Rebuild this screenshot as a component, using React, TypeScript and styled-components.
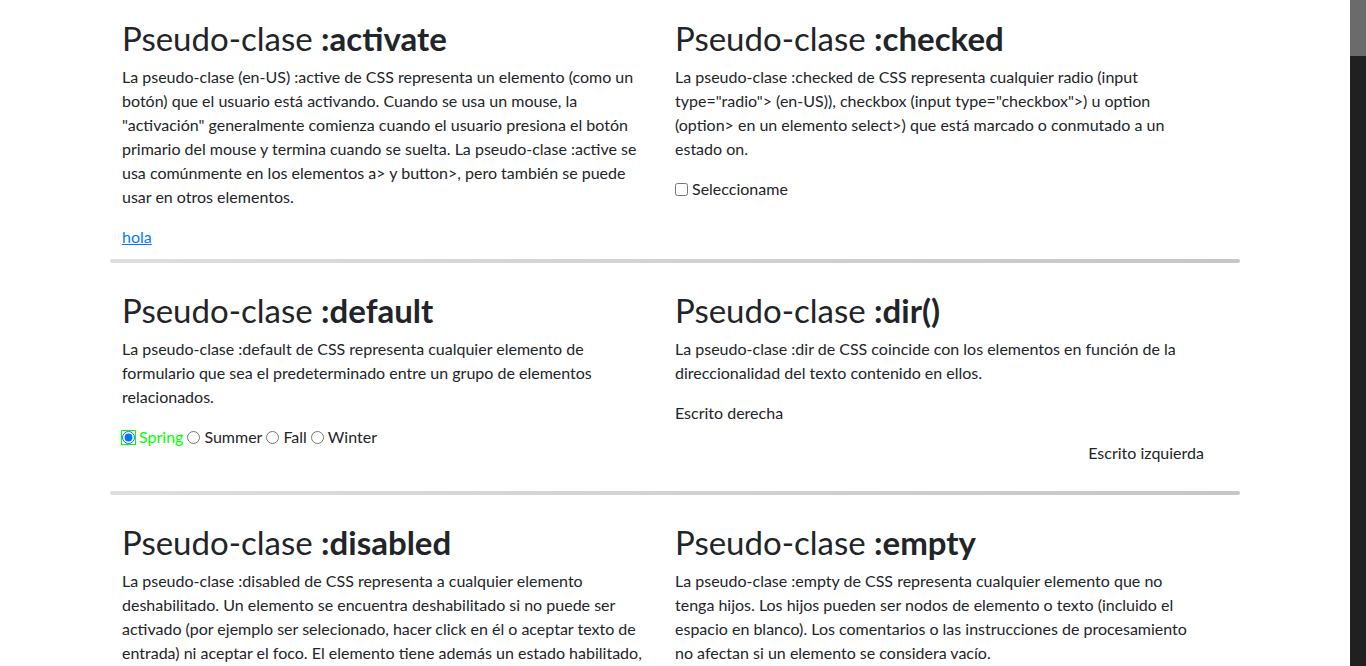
import React from "react";
import styled, { createGlobalStyle } from "styled-components";

const GlobalStyle = createGlobalStyle`
  html { scrollbar-width: none; }
  ::-webkit-scrollbar { display: none; }
  html, body { margin: 0; padding: 0; background: #fff; }
  body {
    padding-right: 16px;
    font-family: Lato, "Noto Sans", sans-serif;
    font-size: 16px;
    line-height: 24px;
    color: #212529;
  }
`;

const ScrollTrack = styled.div`
  position: fixed;
  top: 0;
  right: 0;
  width: 16px;
  height: 100vh;
  background: #202020;
`;

const ScrollThumb = styled.div`
  width: 100%;
  height: 56px;
  background: #6b6b6b;
`;

const Page = styled.main`
  max-width: 1130px;
  margin: 0 auto;
  min-height: 7900px;
`;

const Section = styled.section`
  display: grid;
  grid-template-columns: 529px 529px;
  column-gap: 24px;
  padding: 19px 12px 0;
`;

const Column = styled.div`
  min-width: 0;
`;

const Title = styled.h2`
  font-size: 33px;
  line-height: 38px;
  font-weight: 400;
  margin: 0 0 8px;
  strong { font-weight: 700; }
`;

const Text = styled.p<{ $rtl?: boolean }>`
  margin: 0 0 16px;
  text-align: ${(p) => (p.$rtl ? "right" : "left")};
`;

const Link = styled.a`
  color: #007bff;
  text-decoration: underline;
`;

const Divider = styled.hr`
  border: 0;
  height: 4px;
  margin: 10px 0 9px;
  border-radius: 2px;
  background: linear-gradient(to right, #dedede, #c6c6c6);
`;

const Choices = styled.div`
  display: flex;
  align-items: center;
  margin: 0 0 16px;
`;

const Option = styled.label<{ $default?: boolean }>`
  display: inline-flex;
  align-items: center;
  margin-right: 4px;
  color: ${(p) => (p.$default ? "#00ff00" : "#212529")};
  input {
    margin: 0 4px 0 0;
    width: 13px;
    height: 13px;
    ${(p) => (p.$default ? "outline: 1px solid #00ff00; outline-offset: 0;" : "")}
  }
`;

const Check = styled.label`
  display: inline-flex;
  align-items: center;
  input {
    margin: 0 4px 0 0;
    width: 13px;
    height: 13px;
  }
`;

export default function App() {
  return (
    <>
      <GlobalStyle />
      <Page>
        <Section>
          <Column>
            <Title>
              Pseudo-clase <strong>:activate</strong>
            </Title>
            <Text>
              La pseudo-clase (en-US) :active de CSS representa un elemento (como un botón) que el
              usuario está activando. Cuando se usa un mouse, la "activación" generalmente comienza
              cuando el usuario presiona el botón primario del mouse y termina cuando se suelta. La
              pseudo-clase :active se usa comúnmente en los elementos a&gt; y button&gt;, pero
              también se puede usar en otros elementos.
            </Text>
            <Link href="#">hola</Link>
          </Column>
          <Column>
            <Title>
              Pseudo-clase <strong>:checked</strong>
            </Title>
            <Text>
              La pseudo-clase :checked de CSS representa cualquier radio (input type="radio"&gt;
              (en-US)), checkbox (input type="checkbox"&gt;) u option (option&gt; en un elemento
              select&gt;) que está marcado o conmutado a un estado on.
            </Text>
            <Check>
              <input type="checkbox" />
              Seleccioname
            </Check>
          </Column>
        </Section>
        <Divider />
        <Section>
          <Column>
            <Title>
              Pseudo-clase <strong>:default</strong>
            </Title>
            <Text>
              La pseudo-clase :default de CSS representa cualquier elemento de formulario que sea el
              predeterminado entre un grupo de elementos relacionados.
            </Text>
            <Choices>
              <Option $default>
                <input type="radio" name="season" defaultChecked />
                Spring
              </Option>
              <Option>
                <input type="radio" name="season" />
                Summer
              </Option>
              <Option>
                <input type="radio" name="season" />
                Fall
              </Option>
              <Option>
                <input type="radio" name="season" />
                Winter
              </Option>
            </Choices>
          </Column>
          <Column>
            <Title>
              Pseudo-clase <strong>:dir()</strong>
            </Title>
            <Text>
              La pseudo-clase :dir de CSS coincide con los elementos en función de la
              direccionalidad del texto contenido en ellos.
            </Text>
            <Text>Escrito derecha</Text>
            <Text $rtl>Escrito izquierda</Text>
          </Column>
        </Section>
        <Divider />
        <Section>
          <Column>
            <Title>
              Pseudo-clase <strong>:disabled</strong>
            </Title>
            <Text>
              La pseudo-clase :disabled de CSS representa a cualquier elemento deshabilitado. Un
              elemento se encuentra deshabilitado si no puede ser activado (por ejemplo ser
              selecionado, hacer click en él o aceptar texto de entrada) ni aceptar el foco. El
              elemento tiene además un estado habilitado, en el que puede ser activado o aceptar el
              foco.
            </Text>
          </Column>
          <Column>
            <Title>
              Pseudo-clase <strong>:empty</strong>
            </Title>
            <Text>
              La pseudo-clase :empty de CSS representa cualquier elemento que no tenga hijos. Los
              hijos pueden ser nodos de elemento o texto (incluido el espacio en blanco). Los
              comentarios o las instrucciones de procesamiento no afectan si un elemento se
              considera vacío.
            </Text>
          </Column>
        </Section>
      </Page>
      <ScrollTrack>
        <ScrollThumb />
      </ScrollTrack>
    </>
  );
}
